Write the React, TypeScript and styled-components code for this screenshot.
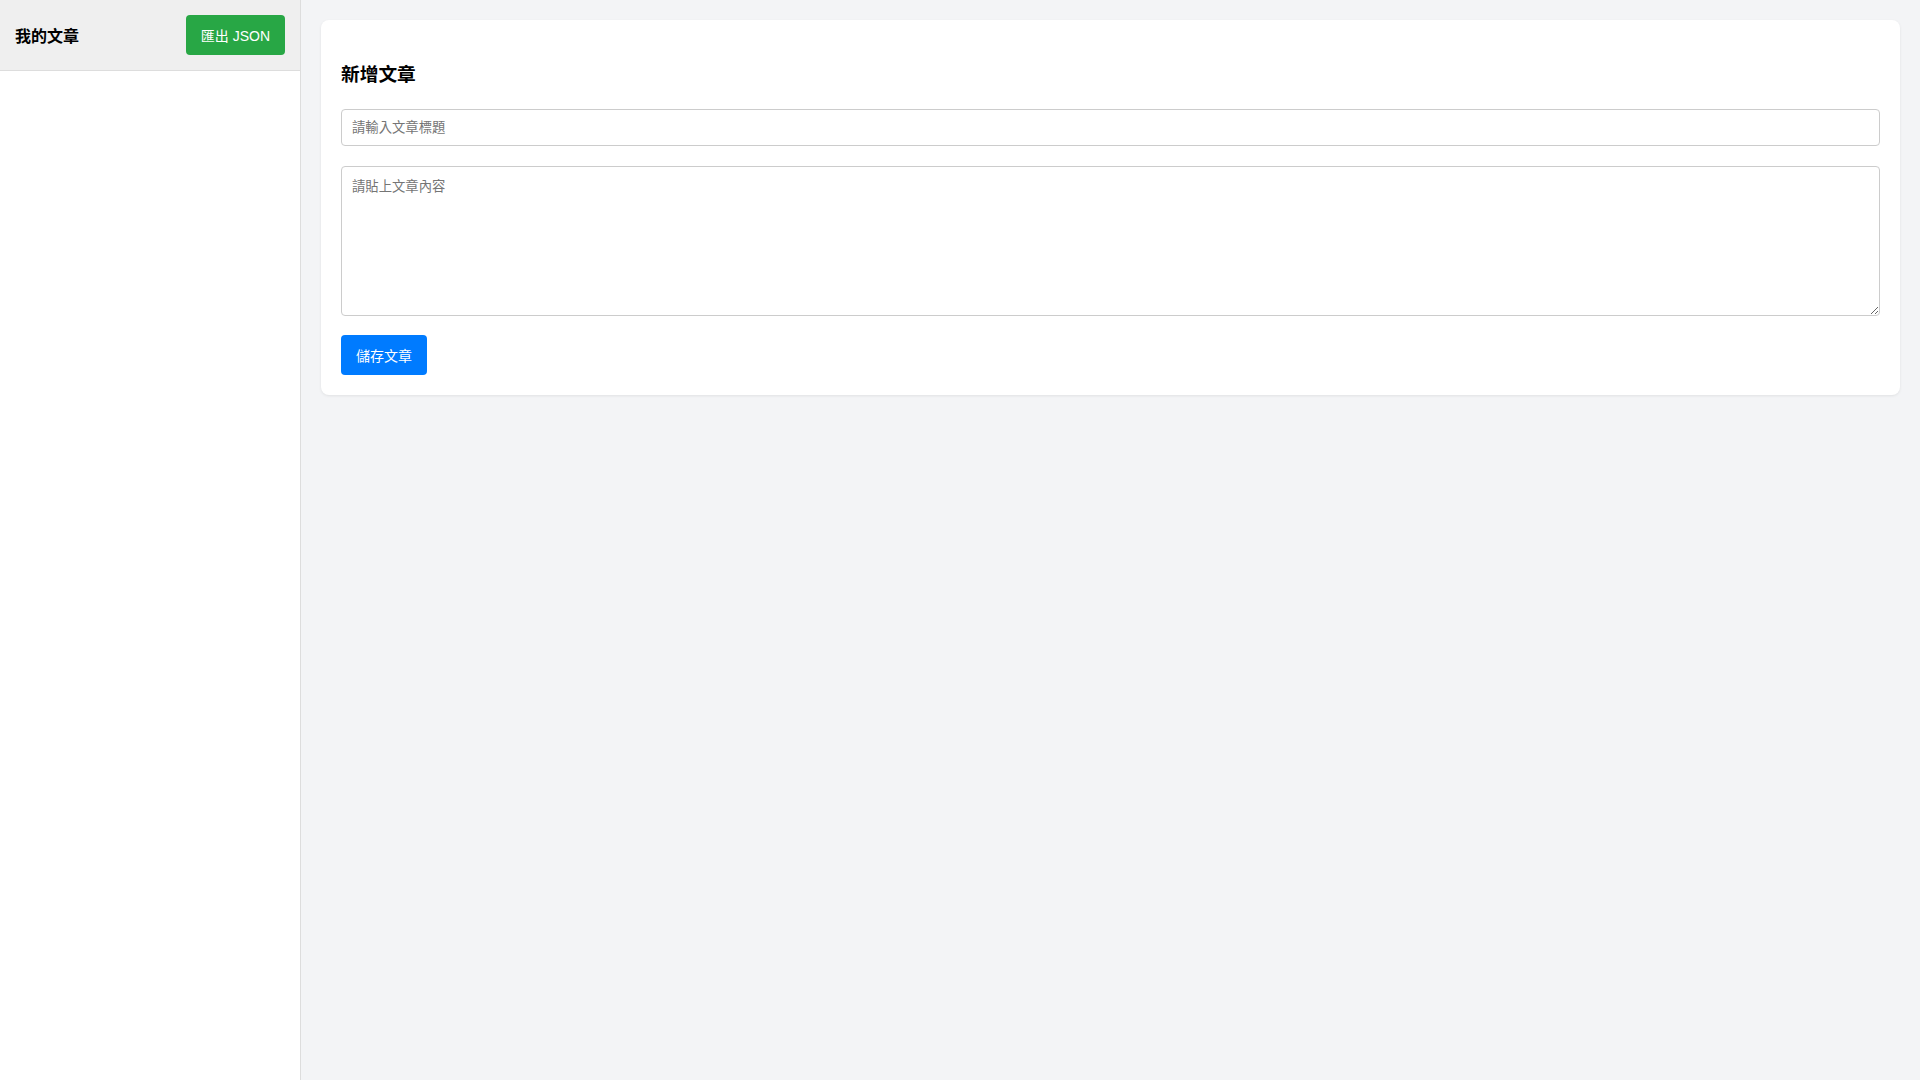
import React, { useState } from 'react';
import styled, { createGlobalStyle } from 'styled-components';

const GlobalStyle = createGlobalStyle`
  html, body, #root {
    margin: 0;
    height: 100%;
  }
  body {
    font-family: "Liberation Sans", Arial, "Noto Sans CJK TC", sans-serif;
    background: #f3f4f6;
    color: #000;
  }
  * {
    box-sizing: border-box;
  }
`;

const Layout = styled.div`
  display: flex;
  height: 100vh;
`;

const Sidebar = styled.aside`
  width: 301px;
  flex-shrink: 0;
  background: #fff;
  border-right: 1px solid #ddd;
  display: flex;
  flex-direction: column;
`;

const SidebarHeader = styled.div`
  display: flex;
  align-items: center;
  justify-content: space-between;
  padding: 15px;
  background: #efefef;
  border-bottom: 1px solid #ddd;
`;

const SidebarTitle = styled.h2`
  margin: 0;
  font-size: 16px;
  font-weight: bold;
`;

const Main = styled.main`
  flex: 1;
  padding: 20px;
`;

const Card = styled.section`
  background: #fff;
  border-radius: 8px;
  padding: 0 20px 20px;
  box-shadow: 0 1px 3px rgba(0, 0, 0, 0.08);
`;

const CardTitle = styled.h3`
  margin: 0;
  padding: 44px 0 23px;
  font-size: 18.72px;
  line-height: 1.15;
  font-weight: bold;
`;

const TitleInput = styled.input`
  display: block;
  width: 100%;
  height: 37px;
  padding: 10px;
  margin: 0 0 20px;
  border: 1px solid #ccc;
  border-radius: 4px;
  font-family: inherit;
  font-size: 13.33px;
  outline: none;
`;

const ContentArea = styled.textarea`
  display: block;
  width: 100%;
  height: 150px;
  padding: 11px 10px 10px;
  margin: 0 0 19px;
  border: 1px solid #ccc;
  border-radius: 4px;
  font-family: inherit;
  font-size: 13.33px;
  line-height: 1.4;
  outline: none;
  resize: vertical;
`;

const Button = styled.button<{ $color: string }>`
  height: 40px;
  padding: 0 15px;
  border: none;
  border-radius: 4px;
  background: ${(p) => p.$color};
  color: #fff;
  font-family: inherit;
  font-size: 14px;
  cursor: pointer;
`;

const App: React.FC = () => {
  const [title, setTitle] = useState('');
  const [content, setContent] = useState('');

  return (
    <>
      <GlobalStyle />
      <Layout>
        <Sidebar>
          <SidebarHeader>
            <SidebarTitle>我的文章</SidebarTitle>
            <Button $color="#28a745">匯出 JSON</Button>
          </SidebarHeader>
        </Sidebar>
        <Main>
          <Card>
            <CardTitle>新增文章</CardTitle>
            <TitleInput
              type="text"
              placeholder="請輸入文章標題"
              value={title}
              onChange={(e) => setTitle(e.target.value)}
            />
            <ContentArea
              placeholder="請貼上文章內容"
              value={content}
              onChange={(e) => setContent(e.target.value)}
            />
            <Button $color="#007bff">儲存文章</Button>
          </Card>
        </Main>
      </Layout>
    </>
  );
};

export default App;
